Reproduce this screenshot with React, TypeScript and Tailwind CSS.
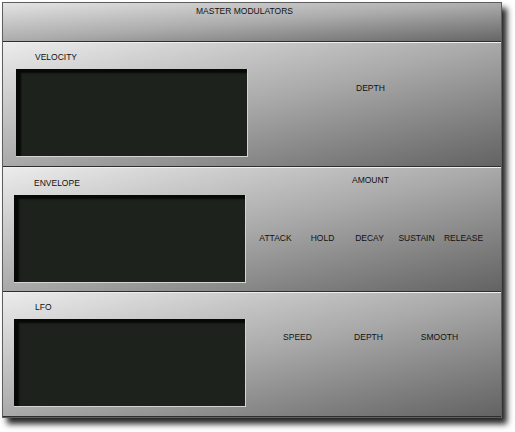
import React from 'react';

const font = { fontFamily: '"Liberation Sans", Arial, sans-serif' };

const Screen: React.FC<{ className?: string }> = ({ className = '' }) => (
  <div
    className={`w-[232px] h-[88px] bg-[#1d221d] border-r border-b border-[#d4d4d4] shadow-[inset_5px_4px_2px_#070907] ${className}`}
  />
);

const Label: React.FC<{ children: React.ReactNode; className?: string }> = ({ children, className = '' }) => (
  <div className={`text-[8.5px] leading-[10px] text-[#111111] whitespace-nowrap ${className}`}>{children}</div>
);

const sectionBg =
  'bg-linear-to-br from-[#ececec] via-[#a9a9a9] to-[#636363] border-t border-[#efefef] border-b border-b-[#2e2e2e]';

export default function App() {
  return (
    <div className="w-[515px] h-[432px] bg-white pt-[2px] pl-[2px]" style={font}>
      <div className="w-[500px] flex flex-col border border-[#5e5e5e] shadow-[5px_6px_6px_rgba(0,0,0,0.85)]">
        {/* Header */}
        <div className="h-[39px] bg-linear-to-br from-[#e4e4e4] via-[#acacac] to-[#666666] border-b border-[#2e2e2e] flex justify-center pt-[3px]">
          <Label className="ml-[-15px]">MASTER MODULATORS</Label>
        </div>

        {/* Velocity */}
        <div className={`h-[125px] flex ${sectionBg}`}>
          <div className="w-[250px] flex flex-col pt-[9px]">
            <Label className="ml-[32px]">VELOCITY</Label>
            <Screen className="ml-[13px] mt-[7px]" />
          </div>
          <div className="flex-1 pl-[103px] pt-[40px]">
            <Label>DEPTH</Label>
          </div>
        </div>

        {/* Envelope */}
        <div className={`h-[125px] flex ${sectionBg}`}>
          <div className="w-[249px] flex flex-col pt-[10px]">
            <Label className="ml-[31px]">ENVELOPE</Label>
            <Screen className="ml-[11px] mt-[7px]" />
          </div>
          <div className="flex-1 flex flex-col pt-[7px]">
            <Label className="ml-[100px]">AMOUNT</Label>
            <div className="grid grid-cols-[repeat(5,47px)] mt-[48px]">
              {['ATTACK', 'HOLD', 'DECAY', 'SUSTAIN', 'RELEASE'].map((k) => (
                <Label key={k} className="text-center">
                  {k}
                </Label>
              ))}
            </div>
          </div>
        </div>

        {/* LFO */}
        <div className={`h-[125px] flex ${sectionBg}`}>
          <div className="w-[250px] flex flex-col pt-[9px]">
            <Label className="ml-[32px]">LFO</Label>
            <Screen className="ml-[11px] mt-[7px]" />
          </div>
          <div className="flex-1 pl-[9px] pt-[39px]">
            <div className="grid grid-cols-[repeat(3,71px)]">
              {['SPEED', 'DEPTH', 'SMOOTH'].map((k) => (
                <Label key={k} className="text-center">
                  {k}
                </Label>
              ))}
            </div>
          </div>
        </div>
      </div>
    </div>
  );
}
